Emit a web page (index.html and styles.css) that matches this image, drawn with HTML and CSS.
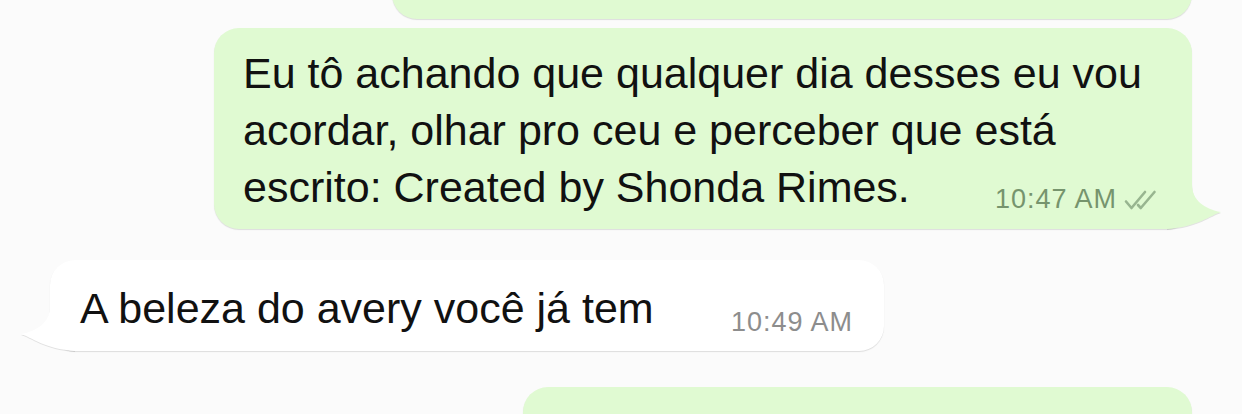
FILE: index.html
```html
<!DOCTYPE html>
<html lang="pt">
<head>
<meta charset="utf-8">
<title>Chat</title>
<link rel="stylesheet" href="styles.css">
</head>
<body>
<div class="chat">
  <div class="msg sent stub stub-top"></div>

  <div class="msg sent main">
    <p class="text">Eu tô achando que qualquer dia desses eu vou<br>acordar, olhar pro ceu e perceber que está<br>escrito: Created by Shonda Rimes.</p>
    <div class="meta">
      <span class="time">10:47 AM</span>
      <svg class="ticks" viewBox="0 0 36 20" width="36" height="20" aria-hidden="true">
        <path d="M2 11.5 L7.5 18 L21 2" />
        <path d="M14 15 L16.8 18 L30.5 2" />
      </svg>
    </div>
    <svg class="tail tail-out" viewBox="0 0 55 50" width="55" height="50" aria-hidden="true">
      <path d="M0 0 H25 V5 C25 22 38 30 54 33 C44 36 30 48 0 50 Z" />
    </svg>
  </div>

  <div class="msg recv">
    <p class="text">A beleza do avery você já tem</p>
    <div class="meta">
      <span class="time">10:49 AM</span>
    </div>
    <svg class="tail tail-in" viewBox="0 0 55 50" width="55" height="50" aria-hidden="true">
      <path d="M55 0 H30 V5 C30 22 17 30 1 33 C11 36 25 48 55 50 Z" />
    </svg>
  </div>

  <div class="msg sent stub stub-bottom"></div>
</div>
</body>
</html>
```

FILE: styles.css
```css
html, body {
  margin: 0;
  padding: 0;
}

body {
  width: 1242px;
  height: 414px;
  overflow: hidden;
  background: #fbfbfb;
  font-family: "Liberation Sans", Arial, sans-serif;
}

.chat {
  display: flex;
  flex-direction: column;
}

.msg {
  position: relative;
  border-radius: 25px;
  box-shadow: 0 1px 1px rgba(0, 0, 0, 0.12);
  box-sizing: border-box;
}

.sent {
  background: #e0fad2;
  align-self: flex-end;
  margin-right: 50px;
}

.stub-top {
  width: 800px;
  height: 80px;
  margin-top: -61px;
}

.stub-bottom {
  width: 669px;
  height: 27px;
  margin-top: 36px;
  border-radius: 25px 25px 0 0;
}

.main {
  width: 978px;
  margin-top: 9px;
  padding: 17px 32px 13px 29px;
  display: grid;
}

.main .text,
.main .meta {
  grid-area: 1 / 1;
}

.main .meta {
  justify-self: end;
  align-self: end;
  margin-bottom: 2px;
}

.text {
  margin: 0;
  font-size: 43px;
  line-height: 57px;
  color: #111111;
  position: relative;
  z-index: 1;
}

.recv {
  background: #ffffff;
  align-self: flex-start;
  margin-left: 50px;
  width: 834px;
  margin-top: 31px;
  padding: 20px 31px 14px 30px;
  display: flex;
  align-items: flex-end;
}

.recv .meta {
  margin-left: auto;
}

.meta {
  display: flex;
  align-items: center;
  gap: 7px;
  font-size: 27px;
  line-height: 30px;
  letter-spacing: 1px;
  position: relative;
  z-index: 1;
}

.sent .time {
  color: #76946d;
}

.recv .time {
  color: #8d8d8d;
}

.ticks {
  display: block;
  margin-top: 2px;
}

.ticks path {
  fill: none;
  stroke: #98b590;
  stroke-width: 2.6;
  stroke-linecap: round;
  stroke-linejoin: round;
}

.tail {
  position: absolute;
  bottom: 0;
  display: block;
  filter: drop-shadow(0 1px 0 rgba(0, 0, 0, 0.1));
}

.tail-out {
  right: -30px;
}

.tail-out path {
  fill: #e0fad2;
}

.tail-in {
  left: -30px;
}

.tail-in path {
  fill: #ffffff;
}
```
